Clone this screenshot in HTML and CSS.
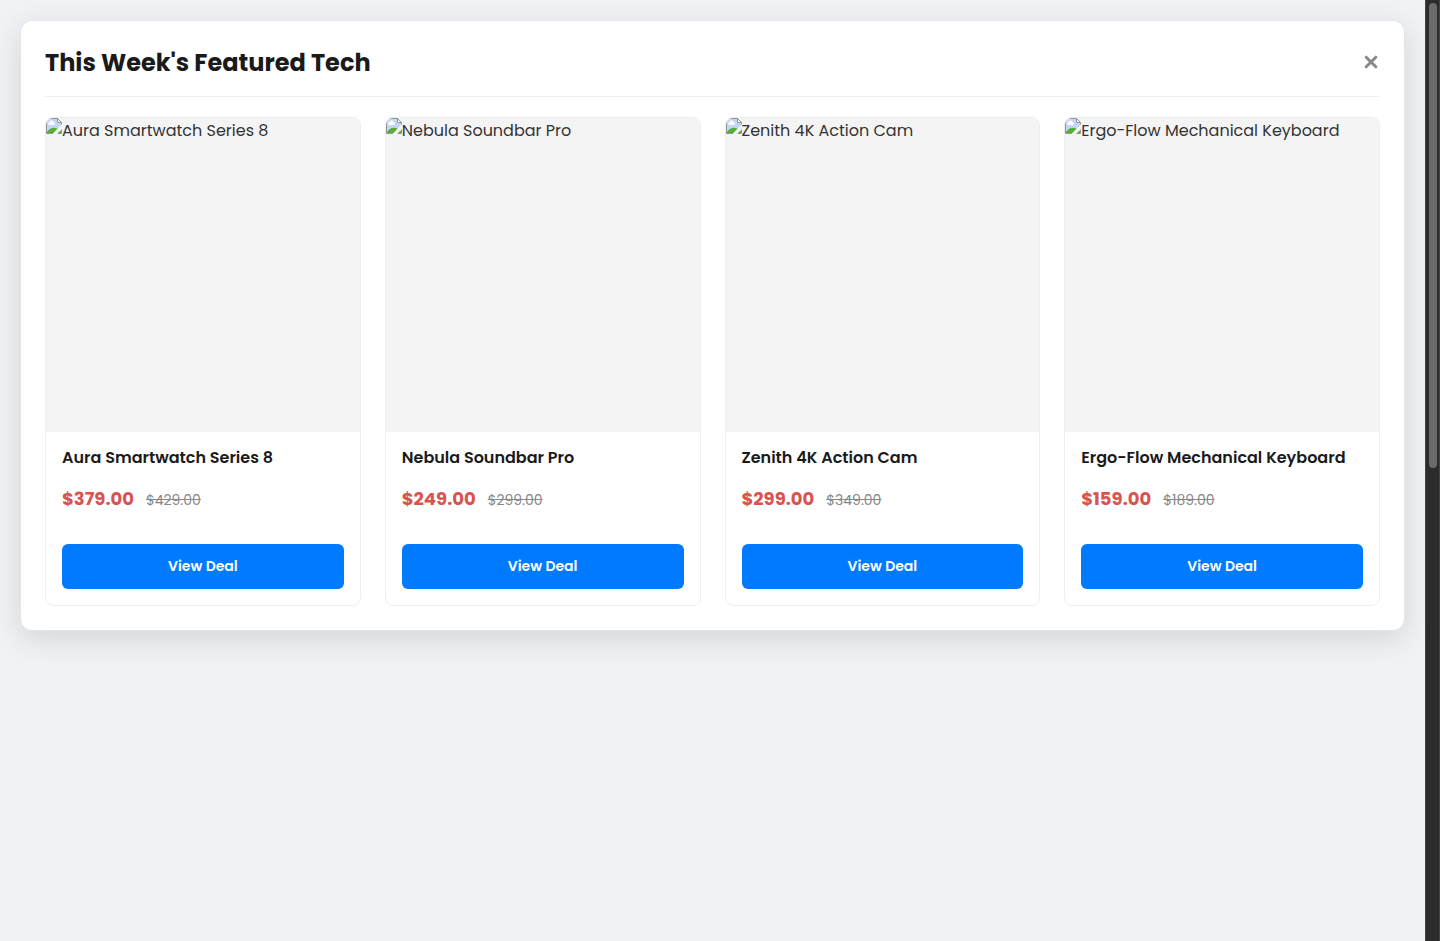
FILE: index.html
```html
<!DOCTYPE html>
<html lang="en">
<head>
<meta charset="utf-8">
<meta name="viewport" content="width=device-width, initial-scale=1">
<title>This Week's Featured Tech</title>
<link rel="stylesheet" href="styles.css">
</head>
<body>
<svg class="defs" aria-hidden="true">
  <symbol id="missing" viewBox="0 0 16 16">
    <path d="M1 1h10v4h4v10H1z" fill="#c3d6f7"/>
    <path d="M3 7a1.500 1.500 0 0 1 .3-2.800 2.200 2.200 0 0 1 4.200-.2A1.600 1.600 0 0 1 8 7z" fill="#fff"/>
    <path d="M1 15v-1C4 9.500 8 8.500 12 11l3 2v2z" fill="#56ae35"/>
    <path d="M11.500.5v4h4z" fill="#fff"/>
    <path d="M.5.5h11l4 4v11H.5zM11.500.5v4h4" fill="none" stroke="#949494"/>
    <path d="M16 6L6.500 16H11l5-5z" fill="#f4f4f4"/>
  </symbol>
</svg>
<main class="page">
  <section class="panel" aria-labelledby="heading">
    <header class="panel-header">
      <h1 class="panel-title" id="heading">This Week's Featured Tech</h1>
      <button class="close" type="button" aria-label="Close"><svg class="close-icon" viewBox="0 0 14 14" aria-hidden="true"><path d="M2.200 2.200l9.600 9.600M11.800 2.200l-9.600 9.600"/></svg></button>
    </header>
    <div class="products">
      <article class="card">
        <div class="photo"><svg class="missing"><use href="#missing"/></svg><span>Aura Smartwatch Series 8</span></div>
        <div class="details">
          <h2 class="name">Aura Smartwatch Series 8</h2>
          <p class="prices"><span class="price">$379.00</span><s class="old-price">$429.00</s></p>
          <a class="deal" href="#">View Deal</a>
        </div>
      </article>
      <article class="card">
        <div class="photo"><svg class="missing"><use href="#missing"/></svg><span>Nebula Soundbar Pro</span></div>
        <div class="details">
          <h2 class="name">Nebula Soundbar Pro</h2>
          <p class="prices"><span class="price">$249.00</span><s class="old-price">$299.00</s></p>
          <a class="deal" href="#">View Deal</a>
        </div>
      </article>
      <article class="card">
        <div class="photo"><svg class="missing"><use href="#missing"/></svg><span>Zenith 4K Action Cam</span></div>
        <div class="details">
          <h2 class="name">Zenith 4K Action Cam</h2>
          <p class="prices"><span class="price">$299.00</span><s class="old-price">$349.00</s></p>
          <a class="deal" href="#">View Deal</a>
        </div>
      </article>
      <article class="card">
        <div class="photo"><svg class="missing"><use href="#missing"/></svg><span>Ergo-Flow Mechanical Keyboard</span></div>
        <div class="details">
          <h2 class="name">Ergo-Flow Mechanical Keyboard</h2>
          <p class="prices"><span class="price">$159.00</span><s class="old-price">$189.00</s></p>
          <a class="deal" href="#">View Deal</a>
        </div>
      </article>
    </div>
  </section>
</main>
<div class="scroll-track" aria-hidden="true"><div class="scroll-thumb"></div></div>
</body>
</html>
```
FILE: styles.css
```css
* { box-sizing: border-box; }

body {
  margin: 0;
  display: flex;
  min-height: 100vh;
  background: #f0f2f6;
  color: #333;
  font: 16px/26px Poppins, Inter, "Open Sans", sans-serif;
}

h1, h2, p { margin: 0; }

.defs { position: absolute; width: 0; height: 0; }

.page { flex: 1; min-width: 0; padding: 20px; }

.panel {
  padding: 24px;
  background: #fff;
  border: 1px solid #e5e5e5;
  border-radius: 12px;
  box-shadow: 0 8px 30px rgba(0, 0, 0, 0.12);
}

.panel-header {
  display: flex;
  justify-content: space-between;
  align-items: center;
  margin-bottom: 20px;
  padding-bottom: 16px;
  border-bottom: 1px solid #eee;
}

.panel-title {
  color: #1a1a1a;
  font-size: 24px;
  line-height: 35px;
  font-weight: 700;
}

.close {
  display: flex;
  padding: 2px 2px 4px;
  border: 0;
  background: none;
  cursor: pointer;
}

.close-icon {
  width: 14px;
  height: 14px;
  fill: none;
  stroke: #888;
  stroke-width: 3;
  stroke-linecap: round;
}

.products {
  display: grid;
  grid-template-columns: repeat(4, minmax(0, 1fr));
  gap: 24px;
}

.card {
  display: flex;
  flex-direction: column;
  overflow: hidden;
  border: 1px solid #eee;
  border-radius: 8px;
}

.photo {
  display: flex;
  align-items: flex-start;
  aspect-ratio: 1;
  background: #f4f4f4;
}

.missing { flex: none; width: 16px; height: 16px; }

.details {
  display: flex;
  flex-direction: column;
  padding: 16px;
}

.name {
  margin-bottom: 16px;
  color: #1a1a1a;
  font-size: 16px;
  line-height: 20px;
  font-weight: 600;
}

.prices {
  display: flex;
  align-items: baseline;
  gap: 12px;
  margin-bottom: 29px;
  line-height: 30px;
}

.price { color: #d9534f; font-size: 18px; font-weight: 700; }

.old-price { color: #888; font-size: 14px; }

.deal {
  padding: 12px;
  border-radius: 6px;
  background: #007bff;
  color: #fff;
  font-size: 14px;
  line-height: 21px;
  font-weight: 600;
  text-align: center;
  text-decoration: none;
}

.scroll-track {
  width: 15px;
  padding: 3px 2px 3px 3px;
  background: #2c2c2c;
  border: solid #444;
  border-width: 0 1px;
}

.scroll-thumb {
  width: 8px;
  height: 465px;
  border-radius: 4px;
  background: #6b6b6b;
}
```
